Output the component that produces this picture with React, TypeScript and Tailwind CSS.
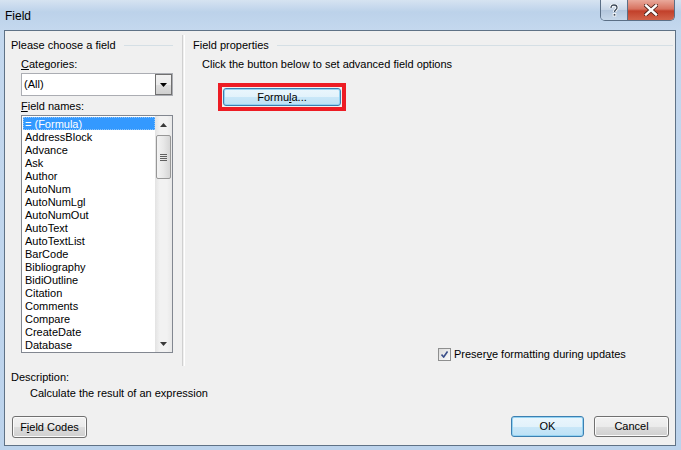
import React from "react";

const items = [
  "= (Formula)",
  "AddressBlock",
  "Advance",
  "Ask",
  "Author",
  "AutoNum",
  "AutoNumLgl",
  "AutoNumOut",
  "AutoText",
  "AutoTextList",
  "BarCode",
  "Bibliography",
  "BidiOutline",
  "Citation",
  "Comments",
  "Compare",
  "CreateDate",
  "Database",
];

function WinButton({
  children,
  className = "",
  def = false,
}: {
  children: React.ReactNode;
  className?: string;
  def?: boolean;
}) {
  return (
    <div
      className={
        "flex items-center justify-center rounded-[3px] border " +
        (def
          ? "border-[#3c7fb1] shadow-[inset_0_0_0_1px_#94d3f2] bg-[linear-gradient(#eaf6fd_0%,#e2f2fb_50%,#c9e7f8_51%,#bde1f6_100%)] "
          : "border-[#707070] shadow-[inset_0_0_0_1px_#fbfbfb] bg-[linear-gradient(#f2f2f2_0%,#ebebeb_50%,#dddddd_51%,#cfcfcf_100%)] ") +
        className
      }
    >
      {children}
    </div>
  );
}

export default function App() {
  return (
    <div className="w-[681px] h-[450px] overflow-hidden bg-[linear-gradient(180deg,#d6e3f1_0px,#bcd2ea_12px,#c4d8ee_30px,#bcd3ec_100%)] font-['Liberation_Sans',Arial,sans-serif] text-[11px] leading-[15px] text-black">
      {/* title bar */}
      <div className="h-[30px] flex items-start">
        <div className="pl-[5px] pt-[8px] text-[12px] leading-[16px]">Field</div>
        <div className="flex-1" />
        <div className="flex mr-[6px] h-[21px] rounded-b-[5px] border border-t-0 border-[#5b6f86] overflow-hidden">
          <div className="w-[27px] flex items-center justify-center bg-[linear-gradient(#e7eef6,#c6d5e6_50%,#b3c6dc_51%,#c7d8ea)] border-r border-[#5b6f86]">
            <svg width="10" height="13" viewBox="0 0 10 13">
              <path d="M2 4 C2 1.5 3.5 1 5 1 C6.8 1 8 2 8 3.8 C8 5.6 5.5 6 5.5 8" fill="none" stroke="#fff" strokeWidth="3" />
              <path d="M2 4 C2 1.5 3.5 1 5 1 C6.8 1 8 2 8 3.8 C8 5.6 5.5 6 5.5 8" fill="none" stroke="#3d4a5a" strokeWidth="1.3" />
              <rect x="4.2" y="9.5" width="2.6" height="2.6" fill="#3d4a5a" stroke="#fff" strokeWidth="0.8" />
            </svg>
          </div>
          <div className="w-[46px] flex items-center justify-center bg-[linear-gradient(#e9a99b,#d7725f_45%,#c2402a_55%,#d2634a)]">
            <svg width="14" height="12" viewBox="0 0 14 12">
              <path d="M2 1.5 L12 10.5 M12 1.5 L2 10.5" stroke="#4a2018" strokeWidth="4" strokeLinecap="square" />
              <path d="M2 1.5 L12 10.5 M12 1.5 L2 10.5" stroke="#fff" strokeWidth="2.4" strokeLinecap="square" />
            </svg>
          </div>
        </div>
      </div>

      {/* client */}
      <div className="ml-[4px] w-[672px] h-[416px] border border-[#5f7286] bg-[#f0f0f0] flex flex-col">
        <div className="flex h-[335px]">
          {/* left column */}
          <div className="w-[177px] pl-[6px] pt-[7px]">
            <div className="flex items-center">
              <span>Please choose a field</span>
              <div className="flex-1 ml-[8px] mr-[9px] border-t border-[#d5dfe5]" />
            </div>
            <div className="pl-[10px]">
              <div className="mt-[4px]">
                <u>C</u>ategories:
              </div>
              <div className="mt-[1px] w-[152px] h-[23px] border border-[#abadb3] bg-white flex">
                <div className="flex-1 pl-[2px] flex items-center">(All)</div>
                <div className="w-[17px] h-[21px] border border-[#707070] bg-[linear-gradient(#f2f2f2,#ebebeb_50%,#dddddd_51%,#cfcfcf)] flex items-center justify-center">
                  <svg width="7" height="4" viewBox="0 0 7 4">
                    <path d="M0 0 H7 L3.5 4 Z" fill="#000" />
                  </svg>
                </div>
              </div>
              <div className="mt-[3px]">
                <u>F</u>ield names:
              </div>
              <div className="mt-[1px] w-[152px] h-[238px] border border-[#828790] bg-white flex">
                <div className="flex-1 pt-[1px] pl-[1px] overflow-hidden">
                  {items.map((it, i) => (
                    <div
                      key={it}
                      className={
                        "h-[13px] leading-[15px] pl-[2px] " +
                        (i === 0 ? "bg-[#3399ff] text-white outline outline-1 outline-dotted outline-[#8fc4f7] -outline-offset-1" : "")
                      }
                    >
                      {it}
                    </div>
                  ))}
                </div>
                <div className="w-[17px] bg-[linear-gradient(90deg,#e3e3e3,#f2f2f2_30%,#f2f2f2_70%,#e8e8e8)] flex flex-col items-center">
                  <div className="h-[17px] w-full flex items-center justify-center">
                    <svg width="7" height="4" viewBox="0 0 7 4">
                      <path d="M3.5 0 L7 4 H0 Z" fill="#3a3a3a" />
                    </svg>
                  </div>
                  <div className="mt-[2px] w-[15px] h-[44px] rounded-[2px] border border-[#979797] bg-[linear-gradient(90deg,#f3f3f3,#e8e8e8_50%,#d6d6d6)] flex flex-col items-center justify-center gap-[1px]">
                    <div className="w-[7px] h-[1px] bg-[#606060]" />
                    <div className="w-[7px] h-[1px] bg-[#606060]" />
                    <div className="w-[7px] h-[1px] bg-[#606060]" />
                    <div className="w-[7px] h-[1px] bg-[#606060]" />
                  </div>
                  <div className="flex-1" />
                  <div className="h-[17px] w-full flex items-center justify-center">
                    <svg width="7" height="4" viewBox="0 0 7 4">
                      <path d="M0 0 H7 L3.5 4 Z" fill="#3a3a3a" />
                    </svg>
                  </div>
                </div>
              </div>
            </div>
          </div>
          {/* separator */}
          <div className="w-[2px] mt-[4px] border-l border-[#d0d0d0] bg-[#f0f0f0] shadow-[1px_0_0_#ffffff]" />
          {/* right column */}
          <div className="flex-1 pl-[9px] pt-[7px]">
            <div className="flex items-center">
              <span>Field properties</span>
              <div className="flex-1 ml-[8px] mr-[2px] border-t border-[#d5dfe5]" />
            </div>
            <div className="pl-[9px] mt-[4px]">Click the button below to set advanced field options</div>
            <div className="ml-[25px] mt-[11px] w-[128px] h-[28px] border-4 border-[#ed1c24] bg-[#f0f0f0] p-[1px]">
              <WinButton def className="w-full h-full">
                Formu<u>l</u>a...
              </WinButton>
            </div>
            <div className="mt-[236px] ml-[245px] flex items-center">
              <div className="w-[13px] h-[13px] border border-[#8e8f8f] bg-[linear-gradient(135deg,#dcdcdc,#fbfbfb)] p-[2px]">
                <svg width="7" height="7" viewBox="0 0 7 7" className="block">
                  <path d="M0.5 3.5 L2.7 6 L6.5 0.5" fill="none" stroke="#3b4f8a" strokeWidth="1.6" />
                </svg>
              </div>
              <span className="ml-[3px]">
                Preser<u>v</u>e formatting during updates
              </span>
            </div>
          </div>
        </div>
        <div className="pl-[6px] mt-[4px]">Description:</div>
        <div className="pl-[25px] mt-[1px]">Calculate the result of an expression</div>
        <div className="flex mt-[15px] pl-[7px] pr-[6px]">
          <WinButton className="w-[75px] h-[22px]">
            F<u>i</u>eld Codes
          </WinButton>
          <div className="flex-1" />
          <WinButton def className="w-[73px] h-[21px]">
            OK
          </WinButton>
          <WinButton className="ml-[10px] w-[75px] h-[21px]">Cancel</WinButton>
        </div>
      </div>
    </div>
  );
}
